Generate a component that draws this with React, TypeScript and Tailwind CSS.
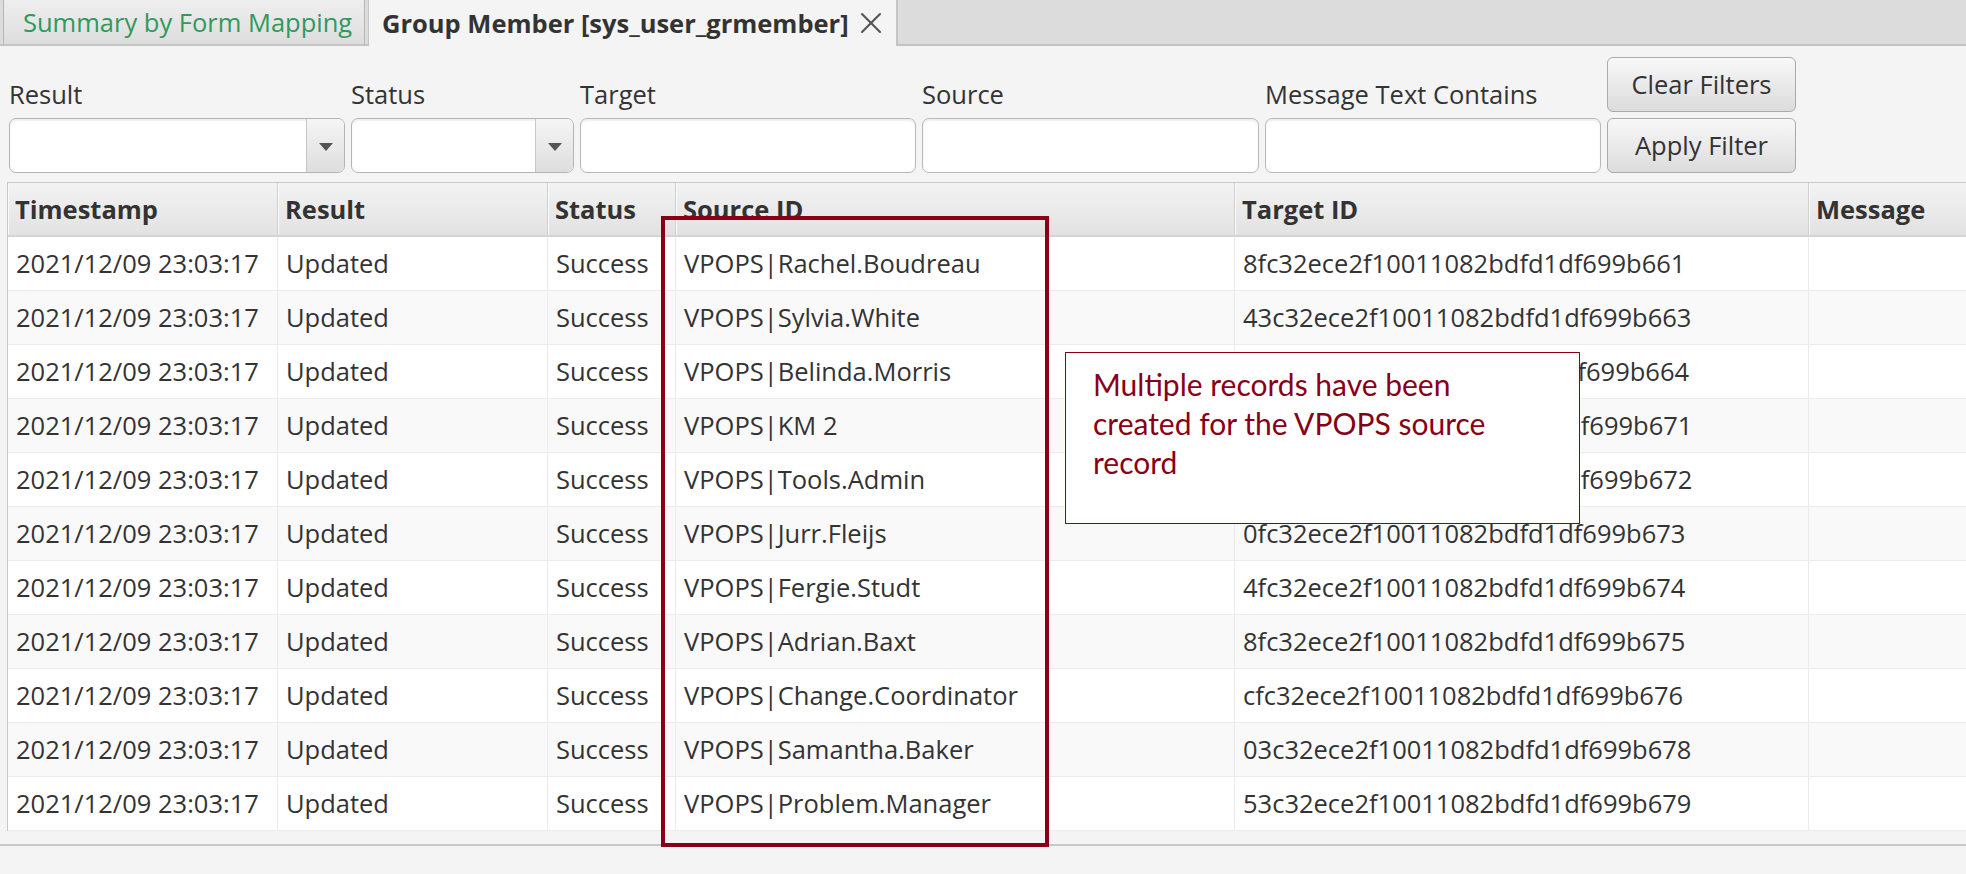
import React from 'react';
import { X } from 'lucide-react';

const rows: [string, string][] = [
  ['VPOPS|Rachel.Boudreau', '8fc32ece2f10011082bdfd1df699b661'],
  ['VPOPS|Sylvia.White', '43c32ece2f10011082bdfd1df699b663'],
  ['VPOPS|Belinda.Morris', 'c7c32ece2f10011082bdfd1df699b664'],
  ['VPOPS|KM 2', '4bc32ece2f10011082bdfd1df699b671'],
  ['VPOPS|Tools.Admin', '8bc32ece2f10011082bdfd1df699b672'],
  ['VPOPS|Jurr.Fleijs', '0fc32ece2f10011082bdfd1df699b673'],
  ['VPOPS|Fergie.Studt', '4fc32ece2f10011082bdfd1df699b674'],
  ['VPOPS|Adrian.Baxt', '8fc32ece2f10011082bdfd1df699b675'],
  ['VPOPS|Change.Coordinator', 'cfc32ece2f10011082bdfd1df699b676'],
  ['VPOPS|Samantha.Baker', '03c32ece2f10011082bdfd1df699b678'],
  ['VPOPS|Problem.Manager', '53c32ece2f10011082bdfd1df699b679'],
];

const cols = 'grid grid-cols-[270px_270px_128px_559px_574px_400px]';

const ComboBox = ({ width }: { width: string }) => (
  <div className={`${width} h-[55px] flex rounded-[7px] border border-[#b4b4b4] bg-white shadow-[inset_0_2px_2px_rgba(0,0,0,0.07)] overflow-hidden`}>
    <div className="flex-1" />
    <div className="w-[38px] flex items-center justify-center pt-[3px] border-l border-[#c6c6c6] bg-gradient-to-b from-[#f5f5f5] to-[#dedede]">
      <div className="w-0 h-0 border-l-[7px] border-r-[7px] border-t-[8px] border-l-transparent border-r-transparent border-t-[#555555]" />
    </div>
  </div>
);

const TextBox = ({ width }: { width: string }) => (
  <div className={`${width} h-[55px] rounded-[7px] border border-[#b9b9b9] bg-white shadow-[inset_0_2px_2px_rgba(0,0,0,0.07)]`} />
);

const Field = ({ label, children }: { label: string; children: React.ReactNode }) => (
  <div className="flex flex-col">
    <div className="h-[36px] leading-[36px] mt-[19px] mb-[6px] text-[#333333]">{label}</div>
    {children}
  </div>
);

const FilterButton = ({ label }: { label: string }) => (
  <button className="w-[189px] h-[55px] rounded-[6px] border border-[#ababab] bg-gradient-to-b from-[#f8f8f8] to-[#dcdcdc] text-[#333333]">
    {label}
  </button>
);

export default function App() {
  return (
    <div
      className="relative w-[1966px] h-[874px] overflow-hidden bg-[#f4f4f4] text-[25.5px] text-[#333333]"
      style={{ fontFamily: '"Open Sans", "Noto Sans", sans-serif' }}
    >
      {/* tab strip */}
      <div className="flex h-[46px] bg-[#dcdcdc]">
        <div className="w-[3px] border-b-2 border-[#c4c4c4]" />
        <div className="w-[362px] flex items-center pl-[19px] border-x border-[#b6b6b6] border-b-2 border-b-[#c4c4c4] bg-gradient-to-b from-[#efefef] to-[#dddddd] text-[#2f9a5c]">
          Summary by Form Mapping
        </div>
        <div className="w-[4px] border-r border-[#c4c4c4] border-b-2 border-b-[#c4c4c4]" />
        <div className="w-[527px] flex items-center pl-[13px] bg-[#f4f4f4] font-bold">
          Group Member [sys_user_grmember]
          <X className="ml-[4px] w-[36px] h-[36px] text-[#555555]" strokeWidth={1.4} />
        </div>
        <div className="flex-1 border-l-2 border-b-2 border-[#c4c4c4]" />
      </div>

      {/* filter bar */}
      <div className="flex gap-[6px] pl-[9px] pt-[11px]">
        <Field label="Result"><ComboBox width="w-[336px]" /></Field>
        <Field label="Status"><ComboBox width="w-[223px]" /></Field>
        <Field label="Target"><TextBox width="w-[336px]" /></Field>
        <Field label="Source"><TextBox width="w-[337px]" /></Field>
        <Field label="Message Text Contains"><TextBox width="w-[336px]" /></Field>
        <div className="flex flex-col gap-[6px]">
          <FilterButton label="Clear Filters" />
          <FilterButton label="Apply Filter" />
        </div>
      </div>

      {/* log table */}
      <div className="ml-[7px] mt-[9px] border-l border-t border-[#c8c8c8] overflow-hidden">
        <div className={`${cols} h-[54px] bg-gradient-to-b from-[#f3f3f3] to-[#e2e2e2] border-b-2 border-[#d4d4d4] font-bold`}>
          {['Timestamp', 'Result', 'Status', 'Source ID', 'Target ID', 'Message'].map(h => (
            <div key={h} className="flex items-center pl-[6px] pr-[8px] border-r border-[#d0d0d0] border-l border-l-[#fafafa] whitespace-nowrap">
              {h}
            </div>
          ))}
        </div>
        {rows.map(([src, tgt], i) => (
          <div key={src} className={`${cols} h-[54px] border-b border-[#ececec] ${i % 2 === 0 ? 'bg-white' : 'bg-[#f9f9f9]'}`}>
            {['2021/12/09 23:03:17', 'Updated', 'Success', src, tgt, ''].map((v, j) => (
              <div key={j} className="flex items-center px-[8px] border-r border-[#ebebeb] whitespace-nowrap">
                {v}
              </div>
            ))}
          </div>
        ))}
      </div>
      <div className="mt-[13px] border-t-2 border-[#c8c8c8]" />

      {/* annotation frame around the source id column */}
      <div className="absolute left-[661px] top-[216px] w-[388px] h-[631px] border-4 border-[#870017]" />
      <div
        className="absolute left-[1065px] top-[352px] w-[515px] h-[172px] border border-[#870017] bg-white pl-[27px] pt-[12px] text-[30px] leading-[39px] text-[#870017]"
        style={{ fontFamily: 'Lato, "Noto Sans", sans-serif' }}
      >
        Multiple records have been
        <br />
        created for the VPOPS source
        <br />
        record
      </div>
    </div>
  );
}
